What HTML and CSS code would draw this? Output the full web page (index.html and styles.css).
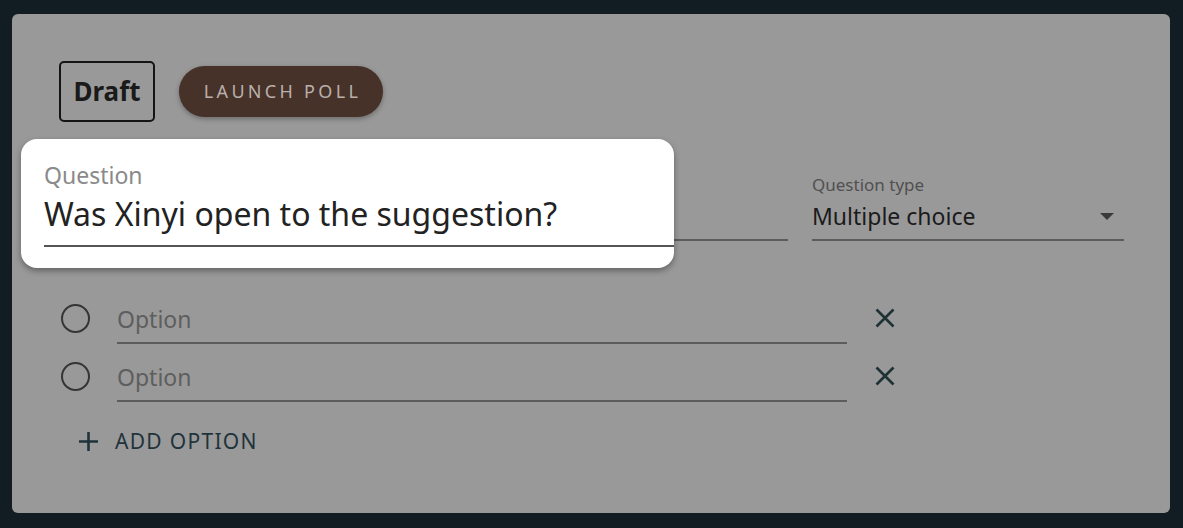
FILE: index.html
```html
<!DOCTYPE html>
<html lang="en">
<head>
    <meta charset="UTF-8">
    <title>Poll Editor</title>
    <link rel="stylesheet" href="styles.css">
</head>
<body>

    <!-- Poll card (dimmed behind the spotlight) -->
    <div class="card">
        <div class="toolbar">
            <span class="status">Draft</span>
            <button class="launch">LAUNCH POLL</button>
        </div>

        <div class="fields">
            <!-- covered by the spotlight, only its underline shows -->
            <div class="field question-field">
                <div class="field-label"></div>
                <div class="field-value"></div>
            </div>
            <div class="field type-field">
                <div class="field-label">Question type</div>
                <div class="field-value select">
                    <span>Multiple choice</span>
                    <svg class="caret" width="14" height="7" viewBox="0 0 14 7"><path d="M0 0h14L7 7z" fill="#3a3a3a"/></svg>
                </div>
            </div>
        </div>

        <div class="options">
            <div class="option-row">
                <span class="radio"></span>
                <div class="option-input">Option</div>
                <svg class="remove" width="20" height="20" viewBox="0 0 20 20"><path d="M1.5 1.5l17 17M18.5 1.5l-17 17" stroke="#1e3236" stroke-width="2.6" fill="none"/></svg>
            </div>
            <div class="option-row">
                <span class="radio"></span>
                <div class="option-input">Option</div>
                <svg class="remove" width="20" height="20" viewBox="0 0 20 20"><path d="M1.5 1.5l17 17M18.5 1.5l-17 17" stroke="#1e3236" stroke-width="2.6" fill="none"/></svg>
            </div>
        </div>

        <button class="add-option">
            <svg width="19" height="19" viewBox="0 0 19 19"><path d="M9.5 0v19M0 9.5h19" stroke="#1f333b" stroke-width="2.6" fill="none"/></svg>
            <span>ADD OPTION</span>
        </button>

        <!-- Spotlight over the question field -->
        <div class="spotlight">
            <div class="spot-label">Question</div>
            <div class="spot-value">Was Xinyi open to the suggestion?</div>
        </div>
    </div>

</body>
</html>
```

FILE: styles.css
```css
body {
    margin: 0;
    padding: 14px 13px 15px 12px;
    background: #121c23;
    font-family: 'Noto Sans', 'Open Sans', sans-serif;
}
.card {
    position: relative;
    height: 499px;
    box-sizing: border-box;
    padding: 47px 46px 0 47px;
    background: #999999;
    border-radius: 6px;
}
/* Top bar */
.toolbar {
    display: flex;
    align-items: center;
    gap: 24px;
}
.status {
    box-sizing: border-box;
    width: 96px;
    height: 61px;
    padding-bottom: 2px;
    display: flex;
    align-items: center;
    justify-content: center;
    border: 2px solid #141414;
    border-radius: 5px;
    font-size: 26px;
    font-weight: 700;
    color: #1a1a1a;
}
.launch {
    width: 204px;
    height: 51px;
    padding: 0 0 2px 3px;
    border: none;
    border-radius: 26px;
    background: #47322a;
    color: #b9b0ab;
    font-family: inherit;
    font-size: 18px;
    letter-spacing: 3.3px;
    box-shadow: 0 2px 5px rgba(0, 0, 0, 0.3);
}
/* Fields row */
.fields {
    display: flex;
    gap: 24px;
    margin-top: 53px;
}
.field {
    display: flex;
    flex-direction: column;
}
.question-field {
    flex: 1;
}
.type-field {
    width: 312px;
}
.field-label {
    height: 20px;
    font-size: 17px;
    line-height: 20px;
    color: #505050;
}
.field-value {
    height: 28px;
    margin-top: 7px;
    padding-bottom: 9px;
    font-size: 23px;
    line-height: 28px;
    color: #1b1b1b;
    white-space: nowrap;
    border-bottom: 2px solid #5c5c5c;
}
.select {
    display: flex;
    align-items: center;
    justify-content: space-between;
}
.caret {
    margin-right: 10px;
}
/* Options */
.options {
    margin-top: 55px;
    display: flex;
    flex-direction: column;
    gap: 10px;
}
.option-row {
    display: flex;
    align-items: center;
}
.radio {
    box-sizing: border-box;
    width: 29px;
    height: 29px;
    margin: 0 0 4px 2px;
    border: 2.5px solid #353535;
    border-radius: 50%;
}
.option-input {
    width: 730px;
    margin-left: 27px;
    padding: 9px 0;
    font-size: 23px;
    line-height: 28px;
    color: #5e5e5e;
    border-bottom: 2px solid #5c5c5c;
}
.remove {
    margin: 0 0 4px 28px;
}
.add-option {
    display: flex;
    align-items: center;
    gap: 17px;
    margin: 27px 0 0 20px;
    padding: 0;
    border: none;
    background: none;
    font-family: inherit;
    font-size: 21px;
    line-height: 24px;
    letter-spacing: 1.3px;
    color: #1f333b;
}
/* Spotlight copy of the question field */
.spotlight {
    position: absolute;
    left: 9px;
    top: 125px;
    width: 653px;
    height: 129px;
    box-sizing: border-box;
    padding: 22px 0 0 23px;
    background: #ffffff;
    border-radius: 16px;
    overflow: hidden;
    box-shadow: 0 3px 6px rgba(0, 0, 0, 0.35);
}
.spot-label {
    font-size: 23px;
    line-height: 28px;
    color: #8a8a8a;
}
.spot-value {
    margin-top: 5px;
    padding-bottom: 11px;
    font-size: 32px;
    line-height: 40px;
    color: #222222;
    border-bottom: 2px solid #555555;
}
```
